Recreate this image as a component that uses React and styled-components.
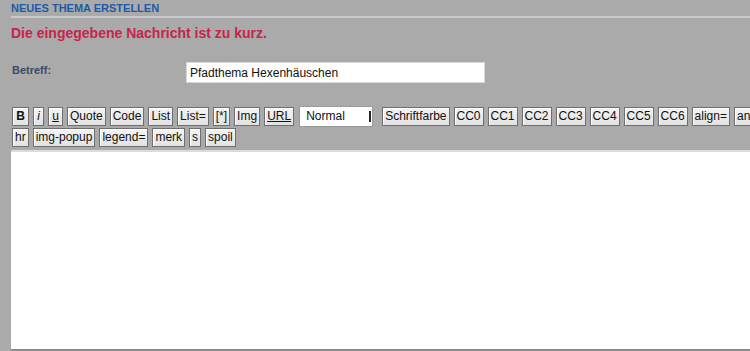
import React from "react";
import styled, { createGlobalStyle } from "styled-components";

const GlobalStyle = createGlobalStyle`
  html, body {
    margin: 0;
    padding: 0;
    background: #aaaaaa;
    overflow: hidden;
  }
  body {
    font-family: "Liberation Sans", Arial, sans-serif;
  }
`;

const Page = styled.div`
  width: 750px;
  height: 351px;
  overflow: hidden;
  background: #aaaaaa;
  padding-left: 11px;
  box-sizing: border-box;
`;

const Heading = styled.h2`
  margin: 0;
  padding-top: 2px;
  font-size: 11px;
  line-height: 13px;
  font-weight: bold;
  color: #1c5aa6;
  border-bottom: 2px solid #c9c9c9;
  padding-bottom: 1px;
`;

const ErrorText = styled.div`
  margin-top: 7px;
  font-size: 14px;
  line-height: 17px;
  font-weight: bold;
  color: #c9234b;
`;

const FieldRow = styled.div`
  display: flex;
  align-items: flex-start;
  margin-top: 20px;
`;

const Label = styled.label`
  width: 174px;
  padding-left: 1px;
  padding-top: 2px;
  font-size: 11px;
  font-weight: bold;
  color: #3b4a68;
`;

const TextInput = styled.input`
  width: 299px;
  height: 21px;
  box-sizing: border-box;
  border: 1px solid #d8d8d8;
  background: #fff;
  padding: 0 3px;
  font-family: "Liberation Sans", Arial, sans-serif;
  font-size: 12px;
  color: #111;
  outline: none;
`;

const Toolbar = styled.div`
  margin-top: 23px;
  display: flex;
  flex-direction: column;
  gap: 1px;
  width: 800px;
`;

const ToolRow = styled.div`
  display: flex;
  align-items: center;
  gap: 4px;
  padding-left: 1px;
`;

const Btn = styled.button`
  height: 19px;
  box-sizing: border-box;
  padding: 0 ${(p) => (p.$w ? "0" : "2px")};
  width: ${(p) => (p.$w ? `${p.$w}px` : "auto")};
  border: 1px solid #6f6f6f;
  box-shadow: inset 1px 1px 0 #ffffff;
  background: linear-gradient(#f4f4f4, #e2e2e2);
  font-family: "Liberation Sans", Arial, sans-serif;
  font-size: 12px;
  line-height: 17px;
  color: #111;
  font-weight: ${(p) => (p.$bold ? "bold" : "normal")};
  font-style: ${(p) => (p.$italic ? "italic" : "normal")};
  text-decoration: ${(p) => (p.$under ? "underline" : "none")};
  white-space: nowrap;
  flex-shrink: 0;
`;

const SelectBox = styled.div`
  position: relative;
  width: 74px;
  height: 21px;
  box-sizing: border-box;
  background: #fff;
  border: 1px solid #9a9a9a;
  font-size: 12px;
  line-height: 19px;
  padding-left: 6px;
  color: #111;
  flex-shrink: 0;
  margin: 0 5px 0 1px;
`;

const Arrow = styled.span`
  position: absolute;
  right: 1px;
  top: 4px;
  width: 2px;
  height: 11px;
  background: #222;
`;

const Editor = styled.textarea`
  display: block;
  margin-top: 3px;
  width: 760px;
  height: 201px;
  box-sizing: border-box;
  border: none;
  border-top: 2px solid #dcdcdc;
  border-bottom: 2px solid #8c8c8c;
  background: #fff;
  resize: none;
  outline: none;
`;

const row1 = ["Quote", "Code", "List", "List=", "[*]", "Img"];
const row1b = ["Schriftfarbe", "CC0", "CC1", "CC2", "CC3", "CC4", "CC5", "CC6", "align=", "anchor="];
const row2 = ["hr", "img-popup", "legend=", "merk", "s", "spoil"];

export default function App() {
  return (
    <Page>
      <GlobalStyle />
      <Heading>NEUES THEMA ERSTELLEN</Heading>
      <ErrorText>Die eingegebene Nachricht ist zu kurz.</ErrorText>
      <FieldRow>
        <Label>Betreff:</Label>
        <TextInput defaultValue="Pfadthema Hexenhäuschen" />
      </FieldRow>
      <Toolbar>
        <ToolRow>
          <Btn $bold $w={17}>B</Btn>
          <Btn $italic $w={11}>i</Btn>
          <Btn $under $w={15}>u</Btn>
          {row1.map((t) => (
            <Btn key={t}>{t}</Btn>
          ))}
          <Btn $under>URL</Btn>
          <SelectBox>
            Normal
            <Arrow />
          </SelectBox>
          {row1b.map((t) => (
            <Btn key={t}>{t}</Btn>
          ))}
        </ToolRow>
        <ToolRow>
          {row2.map((t) => (
            <Btn key={t}>{t}</Btn>
          ))}
        </ToolRow>
      </Toolbar>
      <Editor />
    </Page>
  );
}
